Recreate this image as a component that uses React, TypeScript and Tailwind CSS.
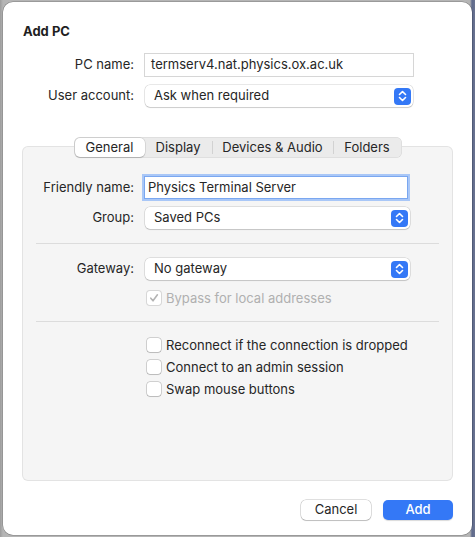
import React from "react";

const font = { fontFamily: "Inter, 'Liberation Sans', sans-serif" };

function Stepper() {
  return (
    <span className="flex h-[17px] w-[17px] items-center justify-center rounded-[4px] bg-[#3478f6]">
      <svg width="9" height="12" viewBox="0 0 9 12" fill="none" stroke="white" strokeWidth="1.6" strokeLinecap="round" strokeLinejoin="round">
        <path d="M1.5 4.5 L4.5 1.5 L7.5 4.5" />
        <path d="M1.5 7.5 L4.5 10.5 L7.5 7.5" />
      </svg>
    </span>
  );
}

function Select({ value, w }: { value: string; w: string }) {
  return (
    <div className={`${w} flex h-[22px] items-center justify-between rounded-[5px] bg-white pl-[9px] pr-[2px] shadow-[0_0_0_0.5px_rgba(0,0,0,0.18),0_1px_1px_rgba(0,0,0,0.12)]`}>
      <span className="text-[13px] text-[#262626]">{value}</span>
      <Stepper />
    </div>
  );
}

function Row({ label, children, mt }: { label: string; children: React.ReactNode; mt?: string }) {
  return (
    <div className={`flex items-center ${mt ?? ""}`}>
      <div className="w-[112px] pr-[1px] text-right text-[13px] text-[#262626]">{label}</div>
      <div className="ml-[10px]">{children}</div>
    </div>
  );
}

function Check({ label, checked, disabled }: { label: string; checked?: boolean; disabled?: boolean }) {
  return (
    <div className="flex h-[16px] items-center">
      <span
        className={`flex h-[14px] w-[14px] items-center justify-center rounded-[3px] bg-white ${
          disabled ? "shadow-[0_0_0_1px_rgba(0,0,0,0.12)]" : "shadow-[0_0_0_0.5px_rgba(0,0,0,0.3),0_1px_1px_rgba(0,0,0,0.1)]"
        }`}
      >
        {checked && (
          <svg width="10" height="10" viewBox="0 0 10 10" fill="none" stroke="#b4b4b4" strokeWidth="1.6" strokeLinecap="round" strokeLinejoin="round">
            <path d="M1.8 5.2 L4 7.8 L8.4 1.8" />
          </svg>
        )}
      </span>
      <span className={`ml-[5px] text-[13px] leading-[16px] ${disabled ? "text-[#b0b0b0]" : "text-[#262626]"}`}>{label}</span>
    </div>
  );
}

export default function App() {
  return (
    <div className="h-[537px] w-[475px] overflow-hidden bg-[linear-gradient(90deg,#9c9c9c_0px,#b5b5b5_3px,#b5b5b5_470px,#5e6a8c_472px,#6a7390_475px)] pl-[3px] pt-[2px]" style={font}>
      <div className="flex h-[533px] w-[469px] flex-col rounded-[10px] bg-white shadow-[0_0_0_0.5px_rgba(0,0,0,0.3)]">
        <div className="ml-[20px] mt-[21px] text-[13px] font-bold leading-[16px] text-[#1f1f1f]">Add PC</div>

        <div className="ml-[20px]">
          <Row label="PC name:" mt="mt-[15px]">
            <div className="flex h-[22px] w-[268px] items-center bg-white pl-[6px] shadow-[0_0_0_1px_#d6d6d6] text-[13px] text-[#262626]">
              termserv4.nat.physics.ox.ac.uk
            </div>
          </Row>
          <Row label="User account:" mt="mt-[9px]">
            <Select value="Ask when required" w="w-[268px]" />
          </Row>
        </div>

        <div className="relative z-10 mt-[30px] flex justify-center">
          <div className="flex h-[21px] items-center rounded-[6px] bg-[#ebebeb] p-[1px] shadow-[inset_0_0_0_0.5px_rgba(0,0,0,0.1)] text-[13px] text-[#262626]">
            <div className="flex h-[19px] w-[70px] items-center justify-center rounded-[5px] bg-white shadow-[0_0_0_0.5px_rgba(0,0,0,0.15),0_1px_1px_rgba(0,0,0,0.15)]">General</div>
            <div className="flex w-[67px] justify-center">Display</div>
            <div className="h-[13px] w-px bg-[#d2d2d2]" />
            <div className="flex w-[120px] justify-center">Devices &amp; Audio</div>
            <div className="h-[13px] w-px bg-[#d2d2d2]" />
            <div className="flex w-[67px] justify-center">Folders</div>
          </div>
        </div>

        <div className="mx-[20px] mt-[-11px] flex h-[333px] flex-col rounded-[5px] bg-[#f5f5f5] shadow-[0_0_0_1px_#e3e3e3]">
          <div className="mt-[30px]">
            <Row label="Friendly name:">
              <div className="flex h-[21px] w-[262px] items-center bg-white pl-[3px] text-[13px] text-[#262626] shadow-[0_0_0_1px_#7aa7f0,0_0_0_3px_#a9c7f7]">
                Physics Terminal Server
              </div>
            </Row>
          </div>
          <Row label="Group:" mt="mt-[9px]">
            <Select value="Saved PCs" w="w-[265px]" />
          </Row>
          <div className="mx-[13px] mt-[14px] h-px bg-[#dcdcdc]" />
          <Row label="Gateway:" mt="mt-[14px]">
            <Select value="No gateway" w="w-[265px]" />
          </Row>
          <div className="ml-[124px] mt-[10px]">
            <Check label="Bypass for local addresses" checked disabled />
          </div>
          <div className="mx-[13px] mt-[15px] h-px bg-[#dcdcdc]" />
          <div className="ml-[124px] mt-[15px] flex flex-col gap-[6px]">
            <Check label="Reconnect if the connection is dropped" />
            <Check label="Connect to an admin session" />
            <Check label="Swap mouse buttons" />
          </div>
        </div>

        <div className="mr-[19px] mt-[20px] flex justify-end gap-[12px]">
          <div className="flex h-[20px] w-[70px] items-center justify-center rounded-[5px] bg-white text-[13px] text-[#262626] shadow-[0_0_0_0.5px_rgba(0,0,0,0.25),0_1px_1px_rgba(0,0,0,0.15)]">Cancel</div>
          <div className="flex h-[20px] w-[70px] items-center justify-center rounded-[5px] bg-[#3478f6] text-[13px] font-medium text-white shadow-[0_1px_1px_rgba(0,0,0,0.15)]">Add</div>
        </div>
      </div>
    </div>
  );
}
